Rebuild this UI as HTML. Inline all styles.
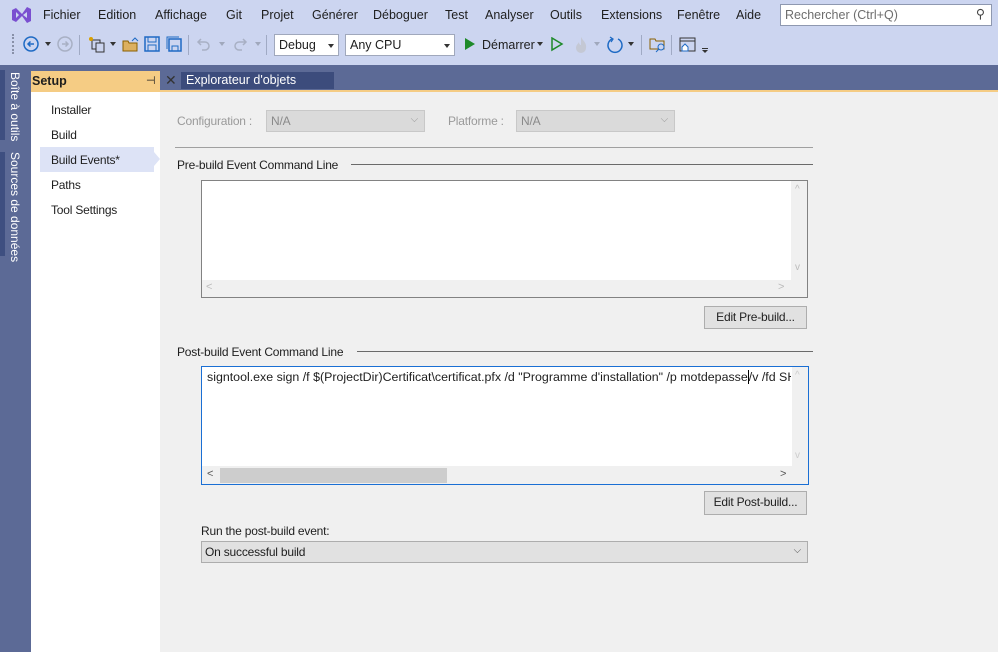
<!DOCTYPE html>
<html><head><meta charset="utf-8"><style>
*{margin:0;padding:0;box-sizing:border-box}
body{width:998px;height:652px;overflow:hidden;background:#f0f0f0;font-family:"Liberation Sans",sans-serif;font-size:12px;color:#1e1e1e;position:relative}
.a{position:absolute}
.menu span{position:absolute;top:8px;font-size:12.5px;color:#1e1e1e}
.t{font-size:12px;letter-spacing:-0.2px}
.sel{position:absolute;border:1px solid #c8c8c8;background:#dadada;color:#8a8a8a;padding:3px 4px}
.btn{position:absolute;border:1px solid #adadad;background:#e1e1e1;text-align:center;line-height:21px}
.chev{position:absolute;right:6px;top:3px;color:#999;font-size:10px}
</style></head><body>
<div class="a" style="left:0;top:0;width:998px;height:65px;background:#ccd5f0"></div>
<svg class="a" style="left:10px;top:5px" width="22" height="20" viewBox="0 0 22 20"><path d="M2 5 L6 3 L12 9 L17 2 L21 4 V16 L17 18 L12 11 L6 17 L2 15 Z M6 7 V13 L9 10 Z M17 7 L13 10 L17 13 Z" fill="#7a4fd0" fill-rule="evenodd"/></svg>
<div class="menu">
<span style="left:43px">Fichier</span><span style="left:98px">Edition</span><span style="left:155px">Affichage</span><span style="left:226px">Git</span><span style="left:261px">Projet</span><span style="left:312px">Générer</span><span style="left:373px">Déboguer</span><span style="left:445px">Test</span><span style="left:485px">Analyser</span><span style="left:550px">Outils</span><span style="left:601px">Extensions</span><span style="left:677px">Fenêtre</span><span style="left:736px">Aide</span>
</div>
<div class="a" style="left:780px;top:4px;width:212px;height:22px;background:#fff;border:1px solid #8e98b0;color:#6d6d6d;padding:3px 4px;font-size:12.5px">Rechercher (Ctrl+Q)<span style="position:absolute;right:6px;top:1px;color:#444">⚲</span></div>
<!-- toolbar -->
<div class="a" style="left:12px;top:34px;width:2px;height:20px;border-left:2px dotted #8890a8"></div>
<svg class="a" style="left:22px;top:35px" width="20" height="20"><circle cx="9" cy="9" r="7" fill="none" stroke="#1e6ac4" stroke-width="1.5"/><path d="M12 9H6M8.5 6.5 6 9l2.5 2.5" stroke="#1e6ac4" stroke-width="1.5" fill="none"/></svg>
<div class="a" style="left:45px;top:42px;border:3px solid transparent;border-top:4px solid #333"></div>
<svg class="a" style="left:56px;top:35px" width="20" height="20"><circle cx="9" cy="9" r="7" fill="none" stroke="#a8b0c4" stroke-width="1.5"/><path d="M6 9h6M9.5 6.5 12 9l-2.5 2.5" stroke="#a8b0c4" stroke-width="1.5" fill="none"/></svg>
<div class="a" style="left:79px;top:35px;width:1px;height:20px;background:#a0aac4"></div>
<svg class="a" style="left:88px;top:36px" width="20" height="18"><rect x="4" y="4" width="8" height="9" fill="none" stroke="#333"/><rect x="8" y="7" width="8" height="9" fill="#ccd5f0" stroke="#333"/><circle cx="3" cy="3" r="2" fill="#d9a000"/></svg>
<div class="a" style="left:110px;top:42px;border:3px solid transparent;border-top:4px solid #333"></div>
<svg class="a" style="left:122px;top:36px" width="18" height="16"><path d="M1 5h5l1 2h8v8H1Z" fill="#dcb060" stroke="#8a6000"/><path d="M10 5l3-3 3 3" stroke="#1e6ac4" fill="none"/></svg>
<svg class="a" style="left:144px;top:36px" width="16" height="16"><rect x="1" y="1" width="14" height="14" fill="none" stroke="#1e6ac4" stroke-width="1.5"/><rect x="4" y="1" width="8" height="5" fill="none" stroke="#1e6ac4"/><rect x="4" y="9" width="8" height="6" fill="none" stroke="#1e6ac4"/></svg>
<svg class="a" style="left:166px;top:36px" width="16" height="16"><rect x="3" y="3" width="12" height="12" fill="none" stroke="#1e6ac4" stroke-width="1.5"/><path d="M1 13V1h12" stroke="#1e6ac4" fill="none"/><rect x="6" y="10" width="6" height="5" fill="none" stroke="#1e6ac4"/></svg>
<div class="a" style="left:188px;top:35px;width:1px;height:20px;background:#a0aac4"></div>
<svg class="a" style="left:196px;top:36px" width="16" height="16"><path d="M5 3 2 6l3 3M2 6h7a4 4 0 0 1 0 8H6" stroke="#a8b0c4" stroke-width="1.5" fill="none"/></svg>
<div class="a" style="left:219px;top:42px;border:3px solid transparent;border-top:4px solid #a0a8bc"></div>
<svg class="a" style="left:232px;top:36px" width="16" height="16"><path d="M11 3l3 3-3 3M14 6H7a4 4 0 0 0 0 8h3" stroke="#a8b0c4" stroke-width="1.5" fill="none"/></svg>
<div class="a" style="left:255px;top:42px;border:3px solid transparent;border-top:4px solid #a0a8bc"></div>
<div class="a" style="left:266px;top:35px;width:1px;height:20px;background:#a0aac4"></div>
<div class="a" style="left:274px;top:34px;width:65px;height:22px;background:#fff;border:1px solid #a0a8bc;padding:3px 4px;font-size:12.5px">Debug<div class="a" style="right:4px;top:9px;border:3px solid transparent;border-top:4px solid #333"></div></div>
<div class="a" style="left:345px;top:34px;width:110px;height:22px;background:#fff;border:1px solid #a0a8bc;padding:3px 4px;font-size:12.5px">Any CPU<div class="a" style="right:4px;top:9px;border:3px solid transparent;border-top:4px solid #333"></div></div>
<div class="a" style="left:465px;top:38px;border:6px solid transparent;border-left:10px solid #1e8a2a;border-right:0"></div>
<span class="a" style="left:482px;top:38px;font-size:12.5px">Démarrer</span>
<div class="a" style="left:537px;top:42px;border:3px solid transparent;border-top:4px solid #333"></div>
<svg class="a" style="left:550px;top:37px" width="14" height="16"><path d="M2 1 12 7 2 13Z" fill="none" stroke="#1e8a2a" stroke-width="1.5"/></svg>
<svg class="a" style="left:573px;top:36px" width="16" height="18"><path d="M8 1c2 4 6 6 5 11a5 5 0 0 1-10 0c0-3 2-4 3-6 0 2 1 3 2 3 0-3 0-5 0-8Z" fill="#c4c8d4"/></svg>
<div class="a" style="left:594px;top:42px;border:3px solid transparent;border-top:4px solid #a0a8bc"></div>
<svg class="a" style="left:606px;top:36px" width="18" height="18"><path d="M6 3a7 7 0 1 0 6 0" stroke="#1e6ac4" stroke-width="1.5" fill="none"/><path d="M4 1l3 2-2 3" stroke="#1e6ac4" stroke-width="1.3" fill="none"/></svg>
<div class="a" style="left:628px;top:42px;border:3px solid transparent;border-top:4px solid #333"></div>
<div class="a" style="left:641px;top:35px;width:1px;height:20px;background:#a0aac4"></div>
<svg class="a" style="left:649px;top:37px" width="18" height="16"><path d="M1 2h5l1 2h8v8H1Z" fill="none" stroke="#8a6000"/><circle cx="12" cy="10" r="3" fill="#ccd5f0" stroke="#1e6ac4"/><path d="M10 12l-3 3" stroke="#1e6ac4"/></svg>
<div class="a" style="left:671px;top:35px;width:1px;height:20px;background:#a0aac4"></div>
<svg class="a" style="left:679px;top:37px" width="18" height="16"><rect x="1" y="1" width="15" height="13" fill="none" stroke="#333"/><path d="M1 4h15" stroke="#333"/><path d="M3 14V10l3-3 3 3v4Z" fill="#fff" stroke="#1e6ac4"/></svg>
<div class="a" style="left:702px;top:48px;width:6px;height:1px;background:#333"></div>
<div class="a" style="left:702px;top:50px;border:3px solid transparent;border-top:3px solid #333"></div>
<!-- dark band -->
<div class="a" style="left:0;top:65px;width:998px;height:25px;background:#5c6a96"></div>
<div class="a" style="left:0;top:90px;width:31px;height:562px;background:#5c6a96"></div>
<div class="a" style="left:0;top:70px;width:5px;height:70px;background:#3e4f80"></div>
<div class="a" style="left:0;top:152px;width:5px;height:104px;background:#3e4f80"></div>
<div class="a" style="left:8px;top:72px;color:#fff;font-size:12px;writing-mode:vertical-rl">Boîte à outils</div>
<div class="a" style="left:8px;top:152px;color:#fff;font-size:12px;writing-mode:vertical-rl">Sources de données</div>
<div class="a" style="left:31px;top:71px;width:129px;height:21px;background:#f5cc84"></div>
<div class="a" style="left:160px;top:90px;width:838px;height:2px;background:#f5cc84"></div>
<span class="a" style="left:32px;top:74px;font-weight:bold;font-size:12.5px">Setup</span>
<span class="a" style="left:146px;top:74px;font-size:11px">⊣</span>
<span class="a" style="left:165px;top:72px;font-size:14px;color:#333">✕</span>
<div class="a" style="left:181px;top:72px;width:153px;height:17px;background:#3c4c7c;color:#fff;padding:1px 5px;font-size:12.5px">Explorateur d'objets</div>
<!-- nav -->
<div class="a" style="left:31px;top:92px;width:129px;height:560px;background:#fff"></div>
<div class="a" style="left:40px;top:147px;width:114px;height:25px;background:#dde3f6"></div>
<div class="a" style="left:154px;top:152px;border:7px solid transparent;border-left:6px solid #dde3f6;border-right:0"></div>
<span class="a t" style="left:51px;top:103px">Installer</span>
<span class="a t" style="left:51px;top:128px">Build</span>
<span class="a t" style="left:51px;top:153px">Build Events*</span>
<span class="a t" style="left:51px;top:178px">Paths</span>
<span class="a t" style="left:51px;top:203px">Tool Settings</span>
<!-- main -->
<span class="a t" style="left:177px;top:114px;color:#9a9a9a">Configuration :</span>
<div class="sel t" style="left:266px;top:110px;width:159px;height:22px">N/A<span class="chev">⌵</span></div>
<span class="a t" style="left:448px;top:114px;color:#9a9a9a">Platforme :</span>
<div class="sel t" style="left:516px;top:110px;width:159px;height:22px">N/A<span class="chev">⌵</span></div>
<div class="a" style="left:175px;top:147px;width:638px;height:1px;background:#a0a0a0"></div>
<span class="a t" style="left:177px;top:158px">Pre-build Event Command Line</span>
<div class="a" style="left:351px;top:164px;width:462px;height:1px;background:#6a6a6a"></div>
<div class="a" style="left:201px;top:180px;width:607px;height:118px;background:#fff;border:1px solid #828282"></div>
<div class="a" style="left:202px;top:280px;width:605px;height:17px;background:#f0f0f0"></div>
<div class="a" style="left:791px;top:181px;width:16px;height:99px;background:#f0f0f0"></div>
<span class="a" style="left:206px;top:281px;color:#bbb;font-size:11px">&lt;</span>
<span class="a" style="left:778px;top:281px;color:#bbb;font-size:11px">&gt;</span>
<span class="a" style="left:795px;top:184px;color:#bbb;font-size:10px">^</span>
<span class="a" style="left:795px;top:262px;color:#bbb;font-size:10px">v</span>
<div class="btn t" style="left:704px;top:306px;width:103px;height:23px">Edit Pre-build...</div>
<span class="a t" style="left:177px;top:345px">Post-build Event Command Line</span>
<div class="a" style="left:357px;top:351px;width:456px;height:1px;background:#6a6a6a"></div>
<div class="a" style="left:201px;top:366px;width:608px;height:119px;background:#fff;border:1px solid #1a6fd4;overflow:hidden">
<div class="a" style="left:5px;top:3px;width:584px;white-space:nowrap;overflow:hidden;font-size:12.4px;letter-spacing:0">signtool.exe sign /f $(ProjectDir)Certificat\certificat.pfx /d "Programme d'installation" /p motdepasse<span style="border-left:1px solid #000"></span>/v /fd SHA256</div>
<div class="a" style="left:590px;top:0;width:16px;height:99px;background:#f0f0f0"></div>
<div class="a" style="left:0;top:99px;width:606px;height:18px;background:#f0f0f0"></div>
<div class="a" style="left:18px;top:101px;width:227px;height:15px;background:#cdcdcd"></div>
<span class="a" style="left:5px;top:101px;color:#555;font-size:11px">&lt;</span>
<span class="a" style="left:578px;top:101px;color:#555;font-size:11px">&gt;</span>
<span class="a" style="left:593px;top:3px;color:#ccc;font-size:10px">^</span>
<span class="a" style="left:593px;top:83px;color:#ccc;font-size:10px">v</span>
</div>
<div class="btn t" style="left:704px;top:491px;width:103px;height:24px">Edit Post-build...</div>
<span class="a t" style="left:201px;top:524px">Run the post-build event:</span>
<div class="a t" style="left:201px;top:541px;width:607px;height:22px;background:#e1e1e1;border:1px solid #adadad;padding:3px 3px">On successful build<span class="chev" style="color:#555">⌵</span></div>
</body></html>
